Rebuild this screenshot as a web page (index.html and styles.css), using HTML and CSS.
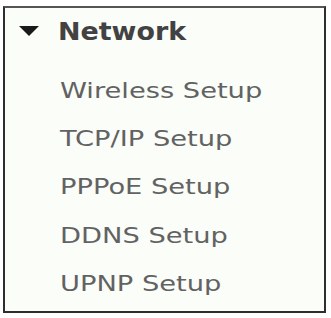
FILE: index.html
```html
<!DOCTYPE html>
<html>
<head>
<meta charset="utf-8">
<link rel="stylesheet" href="styles.css">
</head>
<body>
<div class="panel">
  <div class="header">
    <svg class="caret" width="20" height="10" viewBox="0 0 20 10"><path d="M0 0 H20 L10 10 Z" fill="#1a1a1a"/></svg>
    <span class="title">Network</span>
  </div>
  <ul class="menu">
    <li><span class="item">Wireless Setup</span></li>
    <li><span class="item">TCP/IP Setup</span></li>
    <li><span class="item">PPPoE Setup</span></li>
    <li><span class="item">DDNS Setup</span></li>
    <li><span class="item">UPNP Setup</span></li>
  </ul>
</div>
</body>
</html>
```
FILE: styles.css
```css
html, body {
  margin: 0;
  padding: 0;
  background: #ffffff;
}
body {
  padding: 6px 3px 0 3px;
  font-family: "DejaVu Sans", Verdana, sans-serif;
}
.panel {
  width: 319px;
  height: 303px;
  border: 2px solid #2e2e2e;
  border-top-color: #555;
  background: #fafdf8;
  box-sizing: content-box;
}
.header {
  display: flex;
  align-items: center;
  height: 48px;
  padding-left: 14px;
}
.caret {
  margin-top: -2px;
}
.title {
  display: inline-block;
  margin-left: 19px;
  font-weight: bold;
  font-size: 24px;
  color: #424242;
  transform: scaleX(1.12);
  transform-origin: left center;
}
.menu {
  list-style: none;
  margin: 0;
  padding: 10px 0 0 55px;
}
.menu li {
  height: 48.3px;
  display: flex;
  align-items: center;
}
.item {
  display: inline-block;
  font-size: 22px;
  color: #626262;
  transform: scaleX(1.24);
  transform-origin: left center;
  white-space: nowrap;
}
```
